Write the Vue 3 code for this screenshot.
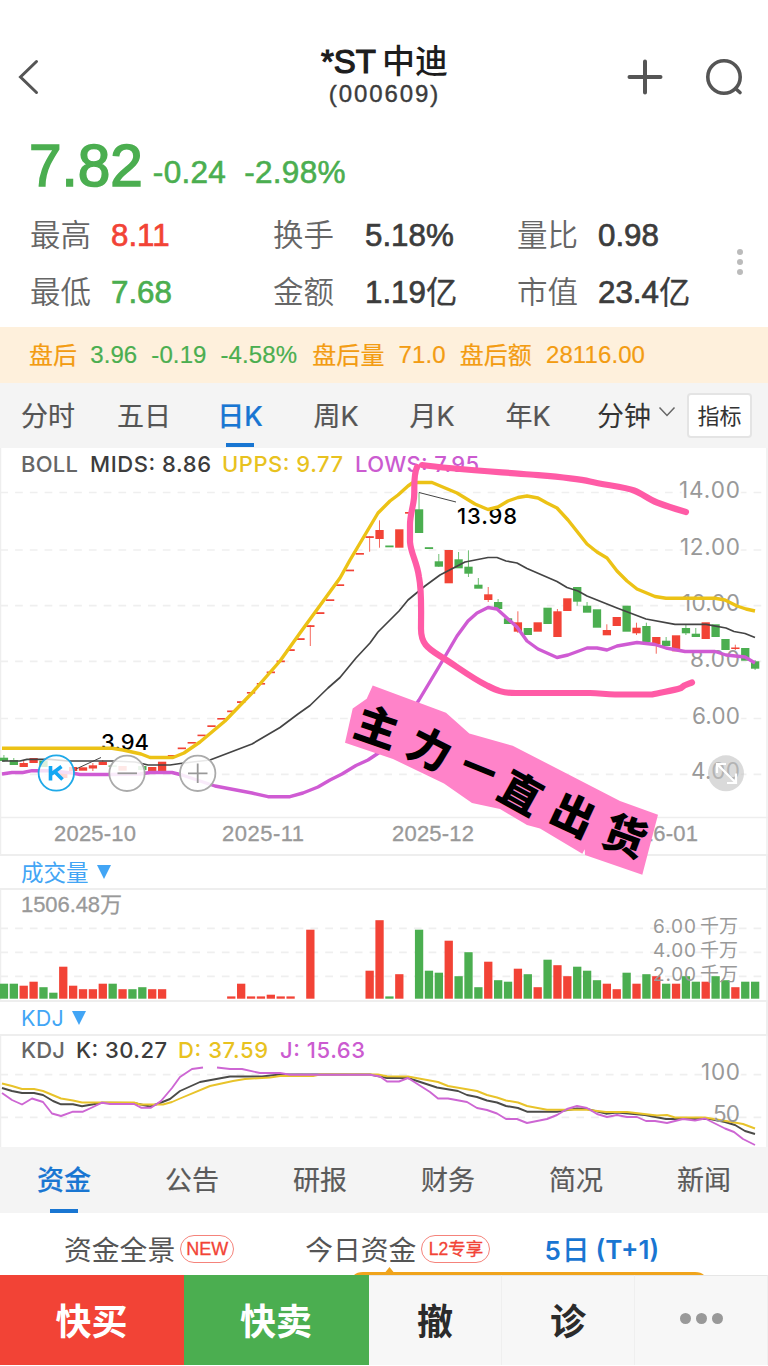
<template>
  <div class="page">
    <header class="header">
      <svg class="icon" width="24" height="40" viewBox="0 0 24 40" fill="none" stroke="#555" stroke-width="3">
        <polyline points="20.500 4.500 4.500 20 20.500 35.500" stroke-linecap="round" />
      </svg>
      <div class="title">
        <h1><span class="latin">*ST</span>中迪</h1>
        <span class="code">(000609)</span>
      </div>
      <div class="actions">
        <svg width="36" height="36" viewBox="0 0 36 36" stroke="#555" stroke-width="4" stroke-linecap="round">
          <path d="M18 2.5V33.5M2.5 18H33.5" />
        </svg>
        <svg width="40" height="40" viewBox="0 0 40 40" fill="none" stroke="#555" stroke-width="3.6" stroke-linecap="round">
          <circle cx="20" cy="20" r="16.2" />
          <path d="M31.5 31.5L36 35.5" />
        </svg>
      </div>
    </header>

    <section class="quote">
      <div class="price-row green">
        <span class="price">7.82</span>
        <span class="change">-0.24</span>
        <span class="change">-2.98%</span>
      </div>
      <div class="stats">
        <template v-for="s in stats" :key="s.label">
          <span class="stat-label">{{ s.label }}</span>
          <span class="stat-value" :class="s.tone">{{ s.value }}<span v-if="s.unit" class="unit">{{ s.unit }}</span></span>
        </template>
      </div>
      <div class="more">
        <i v-for="n in 3" :key="n"></i>
      </div>
    </section>

    <section class="after-hours">
      <span class="cjk">盘后</span>
      <span class="green after-price">3.96</span>
      <span class="green after-diff">-0.19</span>
      <span class="green after-diff">-4.58%</span>
      <span class="cjk after-label">盘后量</span>
      <span class="after-num">71.0</span>
      <span class="cjk after-amount">盘后额</span>
      <span class="after-num">28116.00</span>
    </section>

    <nav class="periods">
      <button
        v-for="p in periods"
        :key="p"
        class="period"
        :class="{ active: p === activePeriod }"
        @click="activePeriod = p"
      >
        {{ p }}
      </button>
      <button class="minute">
        分钟
        <svg width="18" height="12" viewBox="0 0 18 12" fill="none" stroke="#666" stroke-width="1.5">
          <polyline points="1.5 1.5 9 9.5 16.5 1.5" />
        </svg>
      </button>
      <button class="indicator">指标</button>
    </nav>

    <div class="charts">
      <!-- K线 + BOLL -->
      <svg class="chart" width="768" height="406" viewBox="0 448 768 406">
        <path class="frame" d="M0.5 448V854M767 448V854M0 817.5H768" />
        <path class="grid" :d="gridLines([492.5, 550, 605.7, 661.3, 718.5, 774.3])" />
        <text
          v-for="a in priceAxis"
          :key="a.text"
          class="axis halo"
          :x="a.x"
          :y="a.y"
          :textLength="740 - a.x"
        >{{ a.text }}</text>
        <text
          v-for="d in dates"
          :key="d.text"
          class="date"
          :x="d.x"
          y="841"
          textLength="82"
        >{{ d.text }}</text>
        <text
          v-for="l in bollLegend"
          :key="l.text"
          class="legend"
          :x="l.x"
          y="471.500"
          :fill="l.color"
          :textLength="l.w"
        >{{ l.text }}</text>
        <g v-for="c in candles" :key="c[0]" :fill="tone(c[1])">
          <rect v-if="c[4] !== undefined" :x="barX(c[0]) + 3.6" :y="c[4]" width="1" :height="c[5] - c[4]" opacity="0.8" />
          <rect :x="barX(c[0])" :y="c[2]" width="8.3" :height="c[3] - c[2]" />
        </g>
        <path d="M419 492.5L456 502M76 769L101 757.5" stroke="#444" stroke-width="1" />
        <text class="mark" x="457" y="523.500" textLength="60">13.98</text>
        <text class="mark" x="101" y="749.500" textLength="48">3.94</text>
        <polyline class="line" :points="mids" stroke="#444" stroke-width="1.7" />
        <polyline class="line" :points="upps" stroke="#ecc215" stroke-width="3.4" />
        <polyline class="line" :points="lows" stroke="#cf5bd3" stroke-width="3.4" />

        <g fill="none" stroke-width="1.8">
          <circle cx="56.3" cy="773" r="17.7" fill="#fff" fill-opacity="0.8" stroke="#1fa9e8" />
          <path d="M50.5 766V780.5M51.500 774L61.500 766.500M55 772L62.5 779.5" stroke="#12a7f3" stroke-width="3.6" />
          <circle cx="127" cy="773.3" r="17.7" fill="#fff" fill-opacity="0.88" stroke="#aaa" />
          <path d="M117.5 773.3H137" stroke="#999" />
          <circle cx="197.7" cy="773.3" r="17.7" fill="#fff" fill-opacity="0.88" stroke="#aaa" />
          <path d="M188 773.3H207.5M197.7 763.5V783" stroke="#999" />
        </g>
        <circle cx="726" cy="773.3" r="18" fill="#c4c4c4" fill-opacity="0.62" />
        <path d="M717 773V764H726M717 764L736 783M736 773.5V783H727" fill="none" stroke="#fff" stroke-width="2.2" />
      </svg>

      <div class="sub-head"><span class="cjk">成交量</span><i class="caret"></i></div>
      <svg class="chart" width="768" height="111" viewBox="0 889 768 111">
        <path class="frame" d="M0.5 889V1000M767 889V1000" />
        <path class="grid" :d="gridLines([928.3, 952.3, 976.3])" />
        <rect
          v-for="v in volumes"
          :key="v[0]"
          :x="barX(v[0])"
          :y="998.7 - v[2]"
          width="8.3"
          :height="v[2]"
          :fill="tone(v[1])"
        />
        <text class="volume-total" x="21" y="911.500" textLength="101">1506.48万</text>
        <g v-for="a in volumeAxis" :key="a.num">
          <text class="axis-small" x="653" :y="a.y" textLength="43">{{ a.num }}</text>
          <text class="axis-small" x="700" :y="a.y" textLength="38">千万</text>
        </g>
      </svg>

      <div class="sub-head kdj-head"><span>KDJ</span><i class="caret"></i></div>
      <svg class="chart" width="768" height="112" viewBox="0 1035 768 112">
        <path class="frame" d="M0.5 1035V1147M767 1035V1147" />
        <path class="grid" :d="gridLines([1074.7, 1117.3])" />
        <text
          v-for="l in kdjLegend"
          :key="l.text"
          class="legend"
          :x="l.x"
          y="1057.500"
          :fill="l.color"
          :textLength="l.w"
        >{{ l.text }}</text>
        <text class="axis halo" x="701" y="1079.500" textLength="39">100</text>
        <polyline class="line" :points="kLine" stroke="#4b4b48" stroke-width="1.9" />
        <polyline class="line" :points="dLine" stroke="#e8c32a" stroke-width="1.9" />
        <polyline class="line" :points="jLine[0]" stroke="#cd66d3" stroke-width="1.9" />
        <polyline class="line" :points="jLine[1]" stroke="#cd66d3" stroke-width="1.9" />
        <text class="axis" x="713" y="1122" textLength="27">50</text>
      </svg>

      <!-- 手绘标注 -->
      <svg class="notes" width="768" height="440" viewBox="0 448 768 440">
        <path
          d="M422 465C450 469 500 472 530 474.500S575 478 590 481.500S625 487 634 490.500S648 499 657 502.500S675 509 686 512"
          class="marker"
        />
        <path
          d="M417 467C413 476 415 487 414 498C413 508 410 515 410 525V542C411 554 417 562 419 577C422 592 421 610 421 629C421 643 427 648 440 656C455 665 470 677 486 685C496 690 501 693 516 693H590C600 693 605 694.500 615 694.500H652C662 692 672 691 681 688C685 684 688 684 692 682.500"
          class="marker"
        />
        <polygon
          fill="#ff83c9"
          points="372.700,685.500 446,712.700 469.300,733.500 512.700,745.700 620,801 658,814.700 642.300,874.700 585,855 584.700,849.300 582.300,853.700 540,828.500 527,825 500,809 472,803 444,783.500 393,759 345,742.700 352.700,708.500 366.700,698.700"
        />
        <text
          v-for="s in sticker"
          :key="s.ch"
          class="sticker"
          :font-size="s.size"
          :transform="`translate(${s.x} ${s.y}) rotate(${s.rot})`"
          :y="s.size * 0.37"
        >{{ s.ch }}</text>
      </svg>
    </div>

    <nav class="info-tabs">
      <button
        v-for="t in infoTabs"
        :key="t"
        class="info-tab"
        :class="{ active: t === activeInfo }"
        @click="activeInfo = t"
      >
        {{ t }}
      </button>
    </nav>

    <section class="funds">
      <div class="fund">资金全景<span class="pill">NEW</span></div>
      <div class="fund today">今日资金<span class="pill l2">L2专享</span></div>
      <div class="fund active"><span class="five">5</span>日<span class="plus">(T+1)</span></div>
      <svg class="bubble" width="350" height="8" viewBox="0 0 350 8" fill="#f0a41c">
        <path d="M0 8Q3 5 9 5H31.500L35.500 0L39.500 5H341Q347 5 350 8Z" />
      </svg>
    </section>

    <footer class="footer">
      <button class="buy">快买</button>
      <button class="sell">快卖</button>
      <button>撤</button>
      <button>诊</button>
      <button class="dots"><i></i><i></i><i></i></button>
    </footer>
  </div>
</template>

<script setup>
import { ref } from 'vue'

const RED = '#f24336'
const GREEN = '#4bae50'

const activePeriod = ref('日K')
const activeInfo = ref('资金')

const periods = ['分时', '五日', '日K', '周K', '月K', '年K']
const infoTabs = ['资金', '公告', '研报', '财务', '简况', '新闻']

const stats = [
  { label: '最高', value: '8.11', tone: 'red' },
  { label: '换手', value: '5.18%' },
  { label: '量比', value: '0.98' },
  { label: '最低', value: '7.68', tone: 'green' },
  { label: '金额', value: '1.19', unit: '亿' },
  { label: '市值', value: '23.4', unit: '亿' }
]

const bollLegend = [
  { text: 'BOLL', x: 21, w: 57, color: '#666' },
  { text: 'MIDS: 8.86', x: 90, w: 121, color: '#3c3c3c' },
  { text: 'UPPS: 9.77', x: 222, w: 121, color: '#e8c21f' },
  { text: 'LOWS: 7.95', x: 355, w: 124, color: '#cb5bd0' }
]
const kdjLegend = [
  { text: 'KDJ', x: 21, w: 44, color: '#666' },
  { text: 'K: 30.27', x: 76, w: 91, color: '#3c3c3c' },
  { text: 'D: 37.59', x: 178, w: 90, color: '#e8c21f' },
  { text: 'J: 15.63', x: 280, w: 85, color: '#cb5bd0' }
]

const priceAxis = [
  { text: '14.00', x: 679, y: 497.5 },
  { text: '12.00', x: 680, y: 555 },
  { text: '10.00', x: 682, y: 611 },
  { text: '8.00', x: 690, y: 666.5 },
  { text: '6.00', x: 692, y: 724 },
  { text: '4.00', x: 691, y: 779 }
]
const volumeAxis = [
  { num: '6.00', y: 933 },
  { num: '4.00', y: 957.3 },
  { num: '2.00', y: 981.3 }
]
const dates = [
  { text: '2025-10', x: 54 },
  { text: '2025-11', x: 222 },
  { text: '2025-12', x: 392 },
  { text: '2026-01', x: 616 }
]

const sticker = [
  { ch: '主', x: 377, y: 727, rot: 19, size: 43 },
  { ch: '力', x: 430, y: 749, rot: 27, size: 43 },
  { ch: '一', x: 479, y: 769, rot: 22, size: 35 },
  { ch: '直', x: 521, y: 793, rot: 29, size: 42 },
  { ch: '出', x: 573, y: 815, rot: 25, size: 43 },
  { ch: '货', x: 625, y: 836, rot: 20, size: 43 }
]

// [序号, 方向, 实体上, 实体下, 最高, 最低]
const candles = [
  [0, 'g', 757.7, 761, 755, 762], [1, 'g', 760, 765, 758, 765], [2, 'r', 763, 767, 760, 767],
  [3, 'r', 758, 763], [4, 'g', 760.7, 767], [6, 'r', 772.7, 778], [7, 'r', 767, 771],
  [8, 'r', 767.3, 770.7], [9, 'r', 765.3, 768.5, 763, 771], [10, 'r', 761.7, 765, 760, 765],
  [11, 'g', 765.5, 766.7], [12, 'r', 766, 770.7], [14, 'g', 766, 770], [15, 'r', 767, 771],
  [16, 'r', 761.7, 771], [17, 'r', 755, 756.5], [18, 'r', 747.5, 749.2], [19, 'r', 742, 743.6],
  [20, 'r', 734.6, 736.2], [21, 'r', 725.3, 727], [22, 'r', 718, 719.6], [23, 'r', 710.5, 712.2],
  [24, 'r', 701.2, 703], [25, 'r', 692, 693.6], [26, 'r', 683, 684.6], [27, 'r', 671.5, 673.2],
  [28, 'r', 660.5, 662.2], [29, 'r', 649.2, 651], [30, 'r', 638.2, 640], [31, 'r', 625.2, 627, 625, 646],
  [32, 'r', 612.2, 614], [33, 'r', 599.3, 601], [34, 'r', 584.3, 586], [35, 'r', 569.6, 571.3],
  [36, 'r', 553, 554.7], [37, 'r', 536.2, 538, 536, 551.7], [38, 'r', 530, 539, 520.3, 547.7],
  [39, 'g', 545.5, 547.3], [40, 'r', 529.3, 547.7], [41, 'r', 512, 513.7],
  [42, 'g', 509.3, 533, 492.7, 533], [43, 'g', 547.2, 549], [44, 'g', 561.3, 566.7, 554, 567],
  [45, 'r', 550, 583.3], [46, 'g', 559.3, 568.3, 552, 568], [47, 'g', 566.7, 573.7, 550.3, 577],
  [48, 'g', 584.7, 588.7, 578, 588], [49, 'r', 594.3, 600, 587, 602], [50, 'g', 602, 609, 599, 609],
  [51, 'g', 618.3, 624], [52, 'r', 622.3, 631.7, 611.3, 633], [53, 'g', 628, 635],
  [54, 'r', 622.3, 631.7], [55, 'g', 607.7, 624], [56, 'r', 611.3, 637, 609, 637],
  [57, 'r', 598.3, 611], [58, 'g', 587, 601.7, 587, 605.7], [59, 'g', 605.7, 612.7, 602, 612],
  [60, 'g', 609.3, 627.7], [61, 'r', 630, 635.3, 624.3, 635], [62, 'r', 617, 626],
  [63, 'g', 605.7, 631.7], [64, 'r', 627.7, 633.3, 622.7, 635], [65, 'g', 626, 642.3, 622.7, 642],
  [66, 'r', 637, 644.3, 637, 653.7], [67, 'g', 640.7, 646, 637, 646], [68, 'r', 635.3, 651.3],
  [69, 'g', 628, 633.3, 625, 635], [70, 'g', 633.7, 637, 628, 637], [71, 'r', 622.3, 639],
  [72, 'g', 624.3, 637], [73, 'g', 639, 650], [74, 'r', 647.5, 649, 644.7, 650],
  [75, 'g', 648, 660.7], [76, 'g', 661.3, 668.7, 660, 670]
]

const volumes = [
  [0, 'g', 15], [1, 'g', 15], [2, 'r', 13], [3, 'r', 17], [4, 'g', 11.5], [5, 'g', 6], [6, 'r', 32],
  [7, 'r', 13], [8, 'r', 9.5], [9, 'r', 9.5], [10, 'r', 15], [11, 'g', 15], [12, 'r', 9.5],
  [13, 'g', 9.5], [14, 'g', 11.5], [15, 'r', 9.5], [16, 'r', 9.5], [23, 'r', 2.3], [24, 'r', 15],
  [25, 'r', 2.3], [26, 'r', 2.3], [27, 'r', 4], [28, 'r', 2.3], [29, 'r', 2.3], [31, 'r', 69],
  [37, 'r', 28], [38, 'r', 78.5], [39, 'g', 2.3], [40, 'r', 24.5], [42, 'g', 69], [43, 'g', 28],
  [44, 'g', 26], [45, 'r', 58], [46, 'g', 22.5], [47, 'g', 46.5], [48, 'g', 11.5], [49, 'r', 37],
  [50, 'g', 18.5], [51, 'g', 17], [52, 'r', 30], [53, 'g', 24.5], [54, 'r', 11.5], [55, 'g', 39],
  [56, 'r', 33.5], [57, 'r', 22.5], [58, 'g', 32], [59, 'g', 28], [60, 'g', 18.5], [61, 'r', 15],
  [62, 'r', 9.5], [63, 'g', 26], [64, 'r', 15], [65, 'g', 24.5], [66, 'r', 22.5], [67, 'g', 15],
  [68, 'r', 15], [69, 'g', 22.5], [70, 'g', 17], [71, 'r', 17], [72, 'g', 22.5], [73, 'g', 18.5],
  [74, 'r', 11.5], [75, 'g', 17], [76, 'g', 17]
]

const upps =
  '2,748.3 112,748.3 123,750 141,754 150,757.5 173,757.5 184,753 200,742 225,721 252,693 280,661 300,633 ' +
  '340,578 350,560 378,513 390,501 398,495 408,486 413,482.5 432,482.5 457,493 475,504 488,509.5 498,507 508,501 ' +
  '518,497.5 527,496 538,498 547,503 557,508 568,520 587,544 597,552 607,558 617,571 627,581 637,589 655,596.5 ' +
  '666,598.3 715,598.3 725,600 737,606 746,609 755,611'
const mids =
  '2,761 20,761 27,759.3 50,759.3 68,761 112,761 135,762 148,765 170,765 184,763 210,760 252,744 280,727.5 ' +
  '298,714 310,705.5 328,688 340,677.5 356,658 370,643 378,632 399,611 408,600 425,586 440,575 465,562 488,557.5 ' +
  '497,557.5 506,561 517,563 527,568.5 557,581.5 567,587.5 578,591 587,596 617,608 646,619 675,624.3 706,624.3 ' +
  '726,628 734,631.5 745,633.5 755,637.5'
const lows =
  '2,774 12,772.5 23,772.5 32,770.7 50,770.7 72,773 80,774.5 110,774.5 140,774 150,772.5 172,772.5 182,775 ' +
  '215,786 252,793 268,796.7 290,796.7 303,793 318,787 330,780 342,774 356,765.5 368,760 380,752 404,722 ' +
  '419,700 428,685 440,665 457,636 468,621 477,613 488,607.5 497,609 508,619 517,627 527,641 538,649 557,657.5 ' +
  '568,655 587,648 597,648 607,650 617,646 637,642.5 655,644.5 666,648 685,651.5 715,651.5 726,655 745,657 755,663'

const kLine =
  '2,1088 12,1091 22,1093 34,1093 43,1095 53,1101 61,1104.3 73,1104.3 82,1106.3 92,1104.5 102,1102.7 134,1103 ' +
  '150,1106.5 160,1103 170,1099 180,1091 200,1082 230,1076.5 262,1076.5 280,1074.5 370,1074.5 387,1078 408,1078 ' +
  '437,1087.5 458,1091 467,1095 477,1097 487,1100.5 497,1102.5 506,1106 518,1108 527,1111.7 557,1111.7 577,1108.5 ' +
  '587,1109 606,1113.7 617,1112.5 645,1115 666,1119 710,1119 725,1122 735,1125 745,1131 755,1134'
const dLine =
  '2,1083.5 12,1086 22,1089 34,1089 43,1091 61,1098.5 73,1100.5 82,1102.5 134,1102.5 140,1104.5 163,1104.5 ' +
  '172,1102 180,1098.5 210,1086 233,1081 245,1079 270,1077.5 280,1076 313,1076 320,1074.5 378,1074.5 387,1076.3 ' +
  '408,1076.5 438,1082 448,1086 477,1091 487,1095 497,1097.5 506,1100.5 518,1102.5 527,1106 547,1109.7 587,1109.7 ' +
  '606,1112 627,1112 657,1115.5 667,1115 675,1117.5 705,1117.5 726,1121 743,1124 755,1128.5'
// J 值超过上沿的部分不画，所以分成两段
const jLine = [
  '2,1093 12,1100 22,1104.5 32,1098.5 43,1102 52,1113.5 61,1116 73,1111.7 83,1111.7 92,1107.5 102,1102.7 110,1104 ' +
    '134,1104 141,1107.7 151,1107.7 161,1101 172,1088 180,1077 192,1069 203,1067.5',
  '217,1067.5 230,1069 242,1069 260,1073 280,1073 290,1074.7 370,1074.7 380,1076.5 387,1081.5 399,1081.5 408,1078 ' +
    '430,1092 438,1098.5 448,1098.5 467,1102 477,1108 487,1110 497,1113.5 506,1119 517,1119 527,1123 547,1119 ' +
    '557,1115 567,1109 577,1106 587,1108 597,1114 607,1117 617,1115 627,1117 637,1117 646,1121 655,1121 667,1123 ' +
    '683,1119 695,1120.5 705,1118.5 725,1128.5 734,1132 743,1139 755,1145'
]

const tone = (t) => (t === 'r' ? RED : GREEN)
const barX = (i) => i * 9.884 - 0.2
const gridLines = (ys) => ys.map((y) => `M0.300 ${y}H768`).join('')
</script>

<style>
body {
  background: #fff;
}
</style>

<style scoped>
.page {
  width: 768px;
  height: 1366px;
  overflow: hidden;
  background: #fff;
  color: #3c3c3c;
  font-family: 'Liberation Sans', 'Noto Sans CJK SC', sans-serif;
}

button {
  border: none;
  background: none;
  padding: 0;
  margin: 0;
  font: inherit;
  color: inherit;
  white-space: nowrap;
}

.red {
  color: #f24336;
}

.green {
  color: #4bae50;
}

/* CJK glyphs sit low in their line box */
.cjk {
  padding-bottom: 3px;
}

/* Header */
.header {
  height: 128px;
  box-sizing: border-box;
  padding: 26px 24px 0 16px;
  display: grid;
  grid-template-columns: 140px 1fr 140px;
  align-items: center;
}

.title {
  display: flex;
  flex-direction: column;
  align-items: center;
  padding: 0 0 7px 9px;
}

.title h1 {
  margin: 0;
  font-size: 33px;
  line-height: 40px;
  font-weight: 500;
  color: #1d1d1d;
}

.title .latin {
  font-size: 33px;
  margin-right: 6px;
  -webkit-text-stroke: 1.2px #1d1d1d;
}

.code {
  font-size: 24px;
  line-height: 24px;
  letter-spacing: 1.9px;
  -webkit-text-stroke: 0.4px #3c3c3c;
}

.actions {
  display: flex;
  align-items: center;
  justify-content: flex-end;
  gap: 41px;
}

/* Quote */
.quote {
  position: relative;
  height: 199px;
}

.price-row {
  display: flex;
  align-items: baseline;
  height: 78px;
  padding-left: 29px;
  line-height: 76px;
}

.price {
  font-size: 58.500px;
  -webkit-text-stroke: 1.6px #4bae50;
}

.change {
  position: relative;
  top: -3px;
  font-size: 31.500px;
  margin-left: 10px;
  letter-spacing: 0.3px;
  -webkit-text-stroke: 0.6px #4bae50;
}

.change + .change {
  margin-left: 18px;
}

.stats {
  display: grid;
  grid-template-columns: 81px 162px 92px 152px 81px 1fr;
  grid-auto-rows: 57px;
  align-items: center;
  padding-left: 30px;
}

.stat-label {
  padding-bottom: 3px;
  font-size: 30.500px;
  color: #666;
  font-weight: 350;
}

.stat-value {
  display: flex;
  align-items: center;
  height: 57px;
  padding-top: 2px;
  box-sizing: border-box;
  font-size: 31.300px;
  font-weight: 400;
  -webkit-text-stroke: 0.7px currentColor;
}

.unit {
  padding-bottom: 4px;
  -webkit-text-stroke: 0.3px currentColor;
}

.more {
  position: absolute;
  right: 25px;
  top: 121px;
  display: flex;
  flex-direction: column;
  gap: 4px;
}

.more i {
  width: 6px;
  height: 6px;
  border-radius: 50%;
  background: #bbb;
}

/* After hours */
.after-hours {
  display: flex;
  align-items: center;
  height: 56px;
  padding-left: 29px;
  background: #fef0dc;
  color: #f39c12;
  font-size: 24px;
  letter-spacing: 0.1px;
  -webkit-text-stroke: 0.2px currentColor;
}

.after-price {
  margin-left: 13px;
}

.after-diff {
  margin-left: 14px;
}

.after-label {
  margin-left: 15px;
}

.after-num {
  margin-left: 14px;
}

.after-amount {
  margin-left: 14px;
}

/* Periods */
.periods {
  display: flex;
  align-items: center;
  height: 65px;
  background: #f4f4f4;
  font-family: Inter, 'Noto Sans CJK SC', sans-serif;
  font-size: 27px;
  color: #555;
}

.period {
  position: relative;
  width: 96px;
  height: 65px;
  padding-bottom: 3px;
  -webkit-text-stroke: 0.2px currentColor;
}

.period.active {
  color: #1976d2;
  font-weight: 500;
}

.period.active::after,
.info-tab.active::after {
  content: '';
  position: absolute;
  left: 50%;
  bottom: 1px;
  width: 28px;
  height: 4px;
  margin-left: -14px;
  background: #1976d2;
}

.minute {
  display: flex;
  align-items: center;
  gap: 7px;
  margin-left: 21px;
  padding-bottom: 3px;
  color: #333;
}

.minute svg {
  margin-bottom: 4px;
}

.indicator {
  width: 65px;
  height: 45px;
  margin-left: 11px;
  margin-bottom: 1px;
  padding-bottom: 3px;
  border: 2px solid #e4e4e4;
  border-radius: 4px;
  background: #fff;
  color: #333;
  font-size: 22px;
  box-sizing: border-box;
}

/* Charts */
.charts {
  position: relative;
}

.chart {
  display: block;
}

.frame {
  fill: none;
  stroke: #eee;
  stroke-width: 1.5;
}

.grid {
  fill: none;
  stroke: #efefef;
  stroke-width: 1.7;
  stroke-dasharray: 7.700 7.070;
}

.line {
  fill: none;
  stroke-linejoin: round;
}

.axis,
.axis-small,
.legend,
.mark {
  font-family: Inter, 'Noto Sans CJK SC', sans-serif;
  font-size: 22.500px;
}

.axis {
  fill: #999;
}

.axis.halo {
  stroke: #fff;
  stroke-width: 5px;
  paint-order: stroke;
}

.axis-small {
  fill: #999;
  font-size: 19px;
}

.legend {
  font-size: 22px;
  font-weight: 500;
}

.mark {
  fill: #000;
  font-size: 22px;
  font-weight: 500;
}

.date,
.volume-total {
  fill: #999;
  stroke: #999;
  stroke-width: 0.3px;
  font-size: 22px;
}

.sub-head {
  display: flex;
  align-items: center;
  gap: 8px;
  height: 36px;
  box-sizing: border-box;
  padding: 0 0 0 21px;
  border: 2px solid #eee;
  border-left: none;
  color: #42a5f5;
  font-size: 22.500px;
  margin-bottom: -1px;
}

.kdj-head {
  font-family: Inter, sans-serif;
  font-size: 21.500px;
  letter-spacing: 0.3px;
}

.caret {
  border: 7px solid transparent;
  border-top: 14px solid #42a5f5;
  border-bottom: none;
}

.notes {
  position: absolute;
  left: 0;
  top: 0;
  pointer-events: none;
}

.marker {
  fill: none;
  stroke: #ff5ba6;
  stroke-width: 6.200;
  stroke-linecap: round;
  stroke-linejoin: round;
}

.sticker {
  font-family: 'Noto Sans CJK SC', sans-serif;
  font-weight: 900;
  text-anchor: middle;
  fill: #000;
}

/* Info tabs */
.info-tabs {
  display: grid;
  grid-template-columns: repeat(6, 1fr);
  height: 66px;
  background: #f4f4f4;
  font-size: 27px;
  color: #5a5a5a;
}

.info-tab {
  position: relative;
  padding-bottom: 3px;
  -webkit-text-stroke: 0.2px currentColor;
}

.info-tab.active {
  color: #1976d2;
  font-weight: 500;
}

.info-tab.active::after {
  bottom: 0;
}

/* Funds */
.funds {
  position: relative;
  display: flex;
  align-items: center;
  height: 62px;
  box-sizing: border-box;
  padding: 8px 0 0 64px;
  font-size: 27.800px;
  color: #555;
}

.fund {
  display: flex;
  align-items: center;
  white-space: nowrap;
}

.today {
  margin-left: 71px;
}

.fund.active {
  margin-left: 54px;
  color: #1976d2;
  font-weight: 500;
}

.five {
  font-family: Inter, sans-serif;
  font-size: 26px;
  font-weight: 600;
  margin: 4px 1px 0 0;
}

.plus {
  font-family: Inter, sans-serif;
  font-size: 26px;
  font-weight: 600;
  margin: 3px 0 0 6px;
}

.pill {
  width: 54px;
  height: 28px;
  box-sizing: border-box;
  margin: 2px 0 0 5px;
  border: 1.5px solid #f5837b;
  border-radius: 14px;
  color: #f24336;
  font-size: 18px;
  line-height: 26px;
  text-align: center;
  -webkit-text-stroke: 0.3px currentColor;
}

.pill.l2 {
  width: 69px;
  font-size: 17.500px;
}

.bubble {
  position: absolute;
  left: 354px;
  bottom: 0;
}

/* Footer */
.footer {
  display: grid;
  grid-template-columns: 184px 185px 133px 133px 133px;
  height: 90px;
  background: #f7f7f7;
  font-size: 36px;
  font-weight: 700;
  color: #2b2b2b;
}

.footer button {
  padding-bottom: 4px;
  border-right: 1px solid #efefef;
  border-top: 1px solid #e6e6e6;
}

.footer .buy {
  background: #f24336;
  border-color: #f24336;
  color: #fff;
}

.footer .sell {
  background: #4bae50;
  border-color: #4bae50;
  color: #fff;
}

.dots {
  display: flex;
  align-items: center;
  justify-content: center;
  gap: 5px;
}

.dots i {
  width: 11px;
  height: 11px;
  border-radius: 50%;
  background: #999;
}
</style>
